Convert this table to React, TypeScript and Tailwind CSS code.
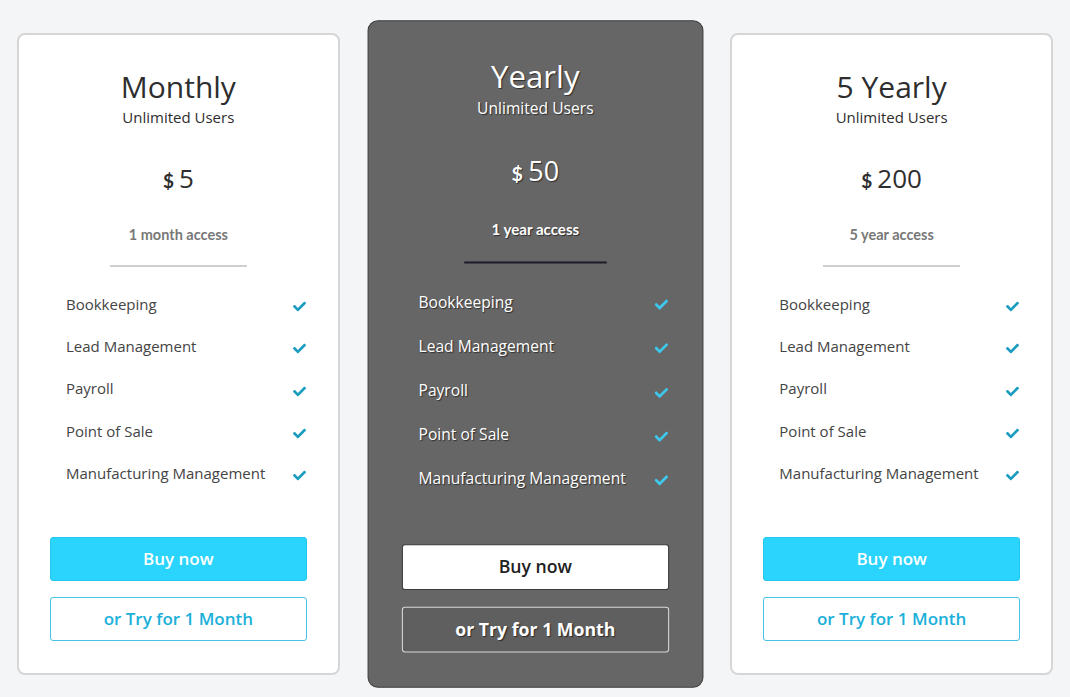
import { FaCheck } from "react-icons/fa";

type Plan = {
    name: string;
    price: string;
    access: string;
    featured?: boolean;
};

const plans: Plan[] = [
    { name: "Monthly", price: "5", access: "1 month access" },
    { name: "Yearly", price: "50", access: "1 year access", featured: true },
    { name: "5 Yearly", price: "200", access: "5 year access" },
];

const features = [
    "Bookkeeping",
    "Lead Management",
    "Payroll",
    "Point of Sale",
    "Manufacturing Management",
];

function PlanCard({ plan }: { plan: Plan }) {
    const dark = !!plan.featured;
    const shadow = dark ? "[text-shadow:1px_1px_1px_rgba(0,0,0,0.55)]" : "";

    return (
        <div
            className={`flex flex-col ${
                dark
                    ? "scale-[1.04] px-[32px] pt-[35px] pb-[33px] bg-[#666666] border border-[#3f3f3f] rounded-[10px] text-white"
                    : "px-[31px] pt-[34px] pb-[32px] bg-white border-2 border-[#d6d6d6] rounded-[8px] text-[#2e2e2e]"
            }`}
        >
            {/* Heading */}
            <h2 className={`text-center text-[30px] leading-[36px] font-normal ${shadow}`}>{plan.name}</h2>
            <p className={`mt-[2px] text-center text-[15px] leading-[20px] ${shadow}`}>Unlimited Users</p>

            {/* Price */}
            <div className={`mt-[33px] h-[36px] flex items-baseline justify-center gap-[5px] ${shadow}`}>
                <span className="font-['Lato',sans-serif] font-bold text-[19px]">$</span>
                <span className="text-[26px] leading-[36px]">{plan.price}</span>
            </div>

            <p
                className={`mt-[30px] text-center font-['Lato',sans-serif] font-bold text-[14.5px] leading-[18px] ${
                    dark ? "text-white " + shadow : "text-[#787878]"
                }`}
            >
                {plan.access}
            </p>
            <div className={`mt-[21px] mx-auto w-[137px] h-[2px] ${dark ? "bg-[#1d1d2b]" : "bg-[#cfcfcf]"}`} />

            {/* Features */}
            <ul className="mt-[16px] flex flex-col">
                {features.map((f) => (
                    <li key={f} className="h-[42.25px] flex items-center justify-between pl-[16px] pr-[1px]">
                        <span className={`text-[15px] ${dark ? "text-white " + shadow : "text-[#444]"}`}>{f}</span>
                        <FaCheck size={13} className={`mt-[5px] ${dark ? "text-[#3dc9ee]" : "text-[#1a9cbf]"}`} />
                    </li>
                ))}
            </ul>

            {/* Actions */}
            <button
                className={`mt-[42.75px] h-[44px] rounded-[3px] text-[17px] font-semibold ${
                    dark
                        ? "bg-white border border-[#3a3a3a] text-[#222]"
                        : "bg-[#2bd4fc] border border-[#22c7ef] text-white"
                }`}
            >
                Buy now
            </button>
            <button
                className={`mt-[16px] h-[44px] rounded-[3px] text-[17px] ${
                    dark
                        ? "bg-[#5f5f5f] border border-[#d8d8d8] text-white font-bold " + shadow
                        : "bg-white border border-[#48c3e7] text-[#1bb0da] font-semibold"
                }`}
            >
                or Try for 1 Month
            </button>
        </div>
    );
}

export default function App() {
    return (
        <div className="min-h-screen bg-[#f4f5f6] font-['Open_Sans',sans-serif]">
            <div className="grid grid-cols-3 gap-[34px] px-[17px] pt-[33px] pb-[33px]">
                {plans.map((p) => (
                    <PlanCard key={p.name} plan={p} />
                ))}
            </div>
        </div>
    );
}
